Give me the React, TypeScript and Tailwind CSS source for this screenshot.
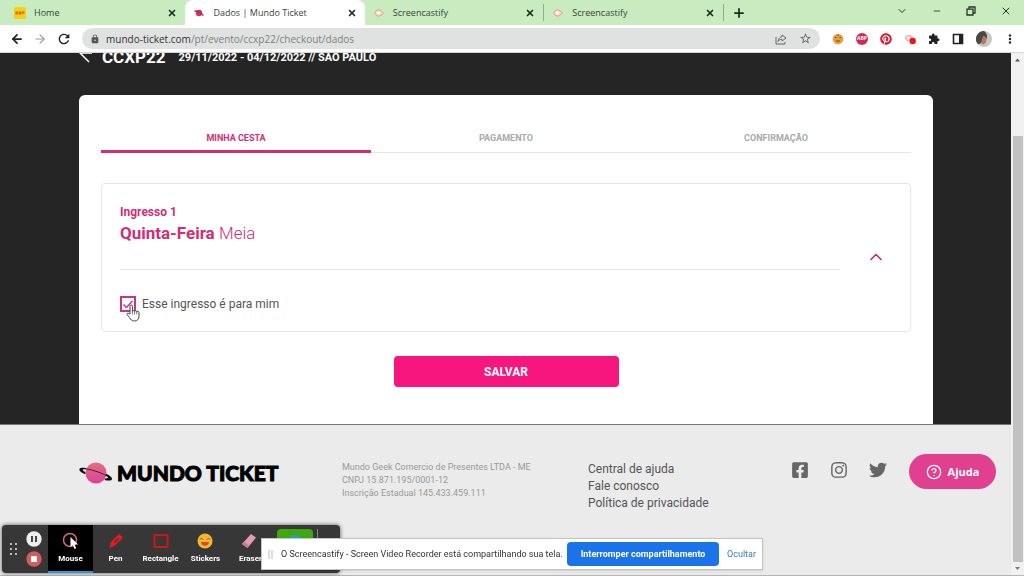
import React, { useState } from 'react';
import {
  ArrowLeft,
  ArrowRight,
  ChevronDown,
  ChevronUp,
  CircleHelp,
  Minus,
  MoreVertical,
  Plus,
  X,
} from 'lucide-react';
import { FaFacebookSquare, FaInstagram, FaPinterest, FaTwitter } from 'react-icons/fa';
import { MdExtension, MdLock, MdOutlineStarBorder, MdRefresh } from 'react-icons/md';

interface BrowserTabProps {
  title: string;
  icon: React.ReactNode;
  active?: boolean;
  divider?: boolean;
}

function BrowserTab({ title, icon, active, divider }: BrowserTabProps) {
  return (
    <div className={active ? 'flex flex-1 h-full rounded-t-lg bg-white' : 'flex flex-1 h-full'}>
      <div className="flex flex-1 items-center gap-2 px-2">
        {icon}
        <button className="flex-1 text-left text-[9px] leading-4 text-[#3a4438]">{title}</button>
        <button aria-label={`Fechar ${title}`}>
          <X className="size-[10px] text-[#1f2a1f]" strokeWidth={4} />
        </button>
      </div>
      {divider && <div className="my-1 w-px bg-[#8fae8a]" />}
    </div>
  );
}

function HomeIcon() {
  return (
    <svg viewBox="0 0 12 12" className="size-3">
      <rect width="12" height="12" rx="2" fill="#f8cf16" />
      <path d="M1.500 4.500h2.500v1H3v1h1v1H1.500zM4.500 4.500H7v3H4.500zM7.500 4.500h3v2h-2v1h-1z" fill="#c8701c" />
    </svg>
  );
}

function PlanetIcon() {
  return (
    <svg viewBox="0 0 12 12" className="size-3">
      <circle cx="6" cy="6" r="3.200" fill="#d8306f" />
      <path d="M1.500 4c3 0 6.500 2 9 4.600" stroke="#a82c5c" strokeWidth="1.300" fill="none" />
    </svg>
  );
}

function CastIcon() {
  return (
    <svg viewBox="0 0 12 12" className="size-3">
      <path d="M4 3 1.500 6 4 9h3l3.500-3L7 3z" fill="#f7dccb" stroke="#ec9a87" />
      <circle cx="5.500" cy="6" r="1.500" fill="#fff" />
    </svg>
  );
}

function TabStrip() {
  return (
    <div className="flex h-[25px] shrink-0 items-center bg-[#c8ebbf] pl-1.5">
      <div className="flex h-full w-[70.5%] shrink-0">
        <BrowserTab title="Home" icon={<HomeIcon />} />
        <BrowserTab title="Dados | Mundo Ticket" icon={<PlanetIcon />} active />
        <BrowserTab title="Screencastify" icon={<CastIcon />} divider />
        <BrowserTab title="Screencastify" icon={<CastIcon />} divider />
      </div>
      <button aria-label="Nova guia" className="ml-2">
        <Plus className="size-3.5 text-[#1f2a1f]" strokeWidth={3} />
      </button>
      <div className="mb-1 ml-auto flex items-center gap-6 pr-3 text-[#2b332a]">
        <button aria-label="Pesquisar guias"><ChevronDown className="size-3" /></button>
        <button aria-label="Minimizar"><Minus className="size-[10px]" /></button>
        <button aria-label="Restaurar">
          <svg viewBox="0 0 10 10" className="size-[10px]" fill="none" stroke="currentColor" strokeWidth="1.300">
            <path d="M1 3.200h6V9H1zM3 3V1h6v6H7.200" />
          </svg>
        </button>
        <button aria-label="Fechar"><X className="size-3" /></button>
      </div>
    </div>
  );
}

function AddressBar() {
  return (
    <div className="flex h-7 shrink-0 items-center border-b border-[#d5d8d5] bg-white pl-2.5 pr-2">
      <div className="flex items-center gap-[9px]">
        <button aria-label="Voltar"><ArrowLeft className="size-3.5 text-[#222]" strokeWidth={3} /></button>
        <button aria-label="Avançar"><ArrowRight className="size-3.5 text-[#999]" strokeWidth={2} /></button>
        <button aria-label="Recarregar"><MdRefresh className="size-4 text-[#222]" /></button>
      </div>
      <div className="ml-2.5 flex h-[21px] flex-1 items-center rounded-full bg-[#dfe2e1] px-2">
        <MdLock className="size-[10px] text-[#555]" />
        <p className="ml-1.5 flex-1 text-[10px] leading-4 text-[#7d8180]">
          <span className="text-[#333]">mundo-ticket.com</span>/pt/evento/ccxp22/checkout/dados
        </p>
        <div className="flex items-center gap-3 text-[#666]">
          <button aria-label="Compartilhar">
            <svg viewBox="0 0 12 12" className="size-3" fill="none" stroke="currentColor">
              <path d="M1 4v7h9V9M7 2l4 3-4 3V6.300C5 6.300 4 7 3 8.500 3.300 5.500 5 4 7 3.700z" />
            </svg>
          </button>
          <button aria-label="Favoritar"><MdOutlineStarBorder className="size-[13px]" /></button>
        </div>
      </div>
      <div className="ml-3 flex items-center gap-3">
        <svg viewBox="0 0 12 12" className="size-3">
          <circle cx="6" cy="6" r="5.300" fill="#e3a03c" />
          <path d="M3 4.500h1.500M7.500 4.500H9M4 8h4M6 2v1" stroke="#7c4415" strokeWidth="1.200" />
        </svg>
        <span className="flex size-3 items-center justify-center rounded-full bg-[#d02a55] text-[5px] font-bold leading-none text-white">
          ABP
        </span>
        <FaPinterest className="size-3 text-[#cf2336]" />
        <svg viewBox="0 0 12 12" className="size-3">
          <path d="M3 2 0.500 5 3 8.500h4L9.500 5 7 2z" fill="#f3b9b5" />
          <circle cx="4.500" cy="5" r="1.500" fill="#fff" />
          <circle cx="8.700" cy="8" r="3.200" fill="#e9151f" />
        </svg>
        <MdExtension className="size-3 text-[#222]" />
        <svg viewBox="0 0 12 12" className="size-3">
          <path d="M1.500 1.500h9v9h-9z" fill="none" stroke="#222" strokeWidth="1.600" />
          <path d="M7 1.500h3.500v9H7z" fill="#222" />
        </svg>
        <svg viewBox="0 0 16 16" className="size-4">
          <circle cx="8" cy="8" r="8" fill="#c9c8c0" />
          <path d="M8 0a8 8 0 0 0-6 13.300C5 13 6 10 10 9c2-3 1-7-2-9z" fill="#4c4a40" />
          <path d="M7 5c3 0 4 3 3 6s-4 3-5 1z" fill="#b57a66" />
        </svg>
        <button aria-label="Menu"><MoreVertical className="size-3 text-[#222]" strokeWidth={3} /></button>
      </div>
    </div>
  );
}

function CheckoutSteps() {
  return (
    <ol className="grid grid-cols-3 text-center text-[9px] font-bold leading-4 text-[#a9a9a9]">
      <li className="border-b-[3px] border-[#d02e76] pb-1 text-[#d02e76]">MINHA CESTA</li>
      <li className="border-b border-[#e6e6e6] pb-1.5">PAGAMENTO</li>
      <li className="border-b border-[#e6e6e6] pb-1.5">CONFIRMAÇÃO</li>
    </ol>
  );
}

function HandCursor() {
  return (
    <svg viewBox="0 0 14 18" className="absolute left-1.5 top-2 h-[18px] w-3.5">
      <path
        d="M4 10V2.300a1.200 1.200 0 0 1 2.400 0V7.500c0-1.300 2.200-1.200 2.200 0 0-1.200 2.200-1 2.200.3 0-1 2.200-.8 2.200.7v3.800c0 2.500-1.500 4.700-4.500 4.700-3 0-3.800-1.400-5-3.500L1 10.500c-.5-1 .8-1.800 1.700-1z"
        fill="#fff"
        stroke="#444"
      />
      <path d="M6.400 8v2.500M8.600 8v2.500M10.800 8v2.500" stroke="#444" strokeWidth="0.700" />
    </svg>
  );
}

function TicketCard() {
  const [mine, setMine] = useState(true);

  return (
    <section className="mt-[30px] flex items-center rounded border border-[#e6e6e6] px-[18px] pb-[17px] pt-5">
      <div className="flex-1">
        <p className="text-xs font-bold leading-4 text-[#d02e76]">Ingresso 1</p>
        <h2 className="text-[17px] leading-[26px] text-[#d02e76]">
          <span className="font-bold">Quinta-Feira</span> <span className="font-light">Meia</span>
        </h2>
        <div className="mt-[23px] border-t border-[#e6e6e6]" />
        <label className="mt-6 flex items-center gap-1.5 text-xs leading-5 text-[#555]">
          <span className="relative flex">
            <input
              type="checkbox"
              checked={mine}
              onChange={(e) => setMine(e.target.checked)}
              className="size-4 appearance-none border-2 border-[#c9357f] bg-white"
            />
            {mine && (
              <svg viewBox="0 0 16 16" className="absolute inset-0 size-4" fill="none" stroke="#c9357f" strokeWidth="1.500">
                <path d="m3.500 8.500 3 3 6-6.500" />
              </svg>
            )}
            <HandCursor />
          </span>
          Esse ingresso é para mim
        </label>
      </div>
      <button aria-label="Recolher ingresso" className="mb-1 ml-[26px] mr-1.5">
        <ChevronUp className="size-5 text-[#c0306f]" />
      </button>
    </section>
  );
}

function MundoTicketLogo() {
  return (
    <div className="flex items-center gap-1">
      <svg viewBox="0 0 34 24" className="h-6 w-[34px]">
        <defs>
          <linearGradient id="planet" x1="0" y1="0" x2="0" y2="1">
            <stop offset="0" stopColor="#e2707c" />
            <stop offset="1" stopColor="#dd3f9c" />
          </linearGradient>
        </defs>
        <circle cx="17" cy="12" r="10.500" fill="url(#planet)" />
        {/* the ring is thick at both ends and a thin line across the planet */}
        <path
          d="M7 7C3 6.300.3 6.700.3 8.500c0 1.800 2.500 3.300 6.200 4.800L6.300 11C4 10 3.300 9 4 8.600c.6-.4 1.500-.4 2.700-.2z"
          fill="#111"
        />
        <path d="M6.500 7.700C14 9 23 12 28 15" fill="none" stroke="#222" strokeWidth="0.900" />
        <path
          d="M27.300 12.800c3.200 1.500 5.700 3.200 5.700 5.200 0 1.700-3 1.900-7.600 1l1-1.700c2.200.3 3 .1 2.600-.7-.4-.7-1.300-1.400-2.300-2z"
          fill="#111"
        />
      </svg>
      <span className="font-['Lato'] text-[21px] font-black leading-[22px] text-black [-webkit-text-stroke:1px_black]">
        MUNDO TICKET
      </span>
    </div>
  );
}

function Footer() {
  return (
    <footer className="flex flex-1 items-start border-t border-[#777] bg-[#ebebeb] pl-[79px] pr-[78px] pt-9">
      <div className="w-[263px]">
        <MundoTicketLogo />
      </div>
      <p className="w-[246px] text-[9px] leading-[13px] text-[#999]">
        Mundo Geek Comercio de Presentes LTDA - ME
        <br />
        CNPJ 15.871.195/0001-12
        <br />
        Inscrição Estadual 145.433.459.111
      </p>
      <nav className="flex w-[203px] flex-col text-xs leading-[17px] text-[#555]">
        <a href="#ajuda">Central de ajuda</a>
        <a href="#contato">Fale conosco</a>
        <a href="#privacidade">Política de privacidade</a>
      </nav>
      <div className="flex gap-[21px] text-[#666]">
        <a href="#facebook" aria-label="Facebook"><FaFacebookSquare className="size-[18px]" /></a>
        <a href="#instagram" aria-label="Instagram"><FaInstagram className="size-[18px]" /></a>
        <a href="#twitter" aria-label="Twitter"><FaTwitter className="size-[18px]" /></a>
      </div>
    </footer>
  );
}

function Scrollbar() {
  return (
    <div className="flex w-[13px] shrink-0 flex-col items-center bg-[#f1f1f1]">
      <svg viewBox="0 0 13 13" className="size-[13px]"><path d="M4 8.500h5L6.500 5.500z" fill="#555" /></svg>
      <div className="h-[70px]" />
      <div className="w-2.5 flex-1 bg-[#c1c1c1]" />
      <svg viewBox="0 0 13 13" className="size-[13px]"><path d="M4 5h5L6.500 8z" fill="#777" /></svg>
    </div>
  );
}

function Tool({ label, active, children }: { label: string; active?: boolean; children: React.ReactNode }) {
  return (
    <button
      className={
        active
          ? 'flex w-[45px] flex-col items-center justify-center gap-1 border-b-2 border-[#2a9be0] bg-black'
          : 'flex w-[45px] flex-col items-center justify-center gap-1 border-b-2 border-transparent'
      }
    >
      {children}
      <span className="font-['Roboto'] text-[8px] font-bold leading-[10px] text-white">{label}</span>
    </button>
  );
}

function RecorderToolbar() {
  return (
    <div className="fixed bottom-[3px] left-0.5 flex h-12 w-[338px] rounded-sm bg-[#373737] shadow-[0_0_4px_#555]">
      <div className="flex w-[46px] items-center justify-between pl-2 pr-1.5">
        <svg viewBox="0 0 8 12" className="h-3 w-2" fill="#bbb">
          <path d="M0 0h2v2H0zM5 0h2v2H5zM0 5h2v2H0zM5 5h2v2H5zM0 10h2v2H0zM5 10h2v2H5z" />
        </svg>
        <div className="flex flex-col gap-1">
          <button aria-label="Pause">
            <svg viewBox="0 0 16 16" className="size-4">
              <circle cx="8" cy="8" r="7.700" fill="#eee" />
              <path d="M6 5v6M10 5v6" stroke="#333" strokeWidth="1.800" />
            </svg>
          </button>
          <button aria-label="Stop">
            <svg viewBox="0 0 16 16" className="size-4">
              <circle cx="8" cy="8" r="7.700" fill="#d65a5e" />
              <path d="M5 5h6v6H5z" fill="#fff" />
            </svg>
          </button>
        </div>
      </div>
      <Tool label="Mouse" active>
        <svg viewBox="0 0 18 18" className="size-[18px]">
          <circle cx="8" cy="8" r="6.500" fill="none" stroke="#d56a6a" strokeWidth="1.500" />
          <path d="M8.500 5v10l2.300-2 1.700 4 1.700-.8-1.700-3.700H16z" fill="#fff" />
        </svg>
      </Tool>
      <Tool label="Pen">
        <svg viewBox="0 0 18 18" className="size-[18px]">
          <path d="m2.500 16 1.500-6L12 2l4 3.500L8 13.500z" fill="#e0201f" />
          <path d="m7.500 10.500 4-4" stroke="#7b1515" strokeWidth="1.200" />
        </svg>
      </Tool>
      <Tool label="Rectangle">
        <svg viewBox="0 0 18 18" className="size-[18px]">
          <path d="M2.500 3h13v12h-13z" fill="none" stroke="#cf1616" strokeWidth="2" />
        </svg>
      </Tool>
      <Tool label="Stickers">
        <svg viewBox="0 0 18 18" className="size-[18px]">
          <circle cx="8" cy="9" r="7.500" fill="#f5b731" />
          <path d="M3 7.500c.8-1.300 2.200-1.300 3 0M10 7.500c.8-1.300 2.200-1.300 3 0" fill="none" stroke="#7a3b12" />
          <path d="M4 10h8c0 5-8 5-8 0z" fill="#d94a2c" />
        </svg>
      </Tool>
      <Tool label="Eraser">
        <svg viewBox="0 0 18 18" className="size-[18px]">
          <path d="M0 12 9 2l5 3.500L5.500 16z" fill="#e39bb5" />
          <path d="m0 12 2-2.200 5.500 3.800-2 2.400z" fill="#c7809b" />
        </svg>
      </Tool>
      <div className="flex items-start gap-1 pl-1 pt-1">
        <svg viewBox="0 0 36 30" className="h-[30px] w-9">
          <rect width="36" height="30" rx="4" fill="#3fa80f" />
          <circle cx="18" cy="15" r="9" fill="#2a9fb5" />
        </svg>
        <div className="h-8 w-px bg-[#888]" />
      </div>
    </div>
  );
}

function ShareNotice() {
  return (
    <div className="fixed bottom-1.5 left-[261px] flex h-8 w-[502px] items-center border border-[#c4c4c4] bg-white px-1.5 font-['Roboto',sans-serif] shadow-sm">
      <svg viewBox="0 0 5 9" className="h-[9px] w-[5px]"><path d="M1 0v9M4 0v9" stroke="#bbb" /></svg>
      <p className="flex-1 whitespace-nowrap pl-2 text-[9px] leading-4 text-[#333]">
        O Screencastify - Screen Video Recorder está compartilhando sua tela.
      </p>
      <button className="h-6 w-[152px] shrink-0 whitespace-nowrap rounded-sm bg-[#1a73e8] text-[9px] font-bold leading-4 text-white">
        Interromper compartilhamento
      </button>
      <button className="pl-2 text-[9px] leading-4 text-[#3a7ab8]">Ocultar</button>
    </div>
  );
}

export default function App() {
  return (
    <div className="flex h-screen flex-col overflow-hidden border-b border-[#b5b5b5] font-['Open_Sans','Noto_Sans',sans-serif]">
      <TabStrip />
      <AddressBar />
      <div className="flex min-h-0 flex-1">
        <div className="flex min-w-0 flex-1 flex-col bg-[#252525] font-['Roboto',sans-serif]">
          {/* page is scrolled, so only the lower part of the header shows */}
          <header className="flex h-3 shrink-0 items-end gap-[9px] overflow-hidden pl-[79px] pr-[78px] font-bold text-white">
            <a href="#voltar" aria-label="Voltar">
              <svg viewBox="0 0 14 20" className="h-5 w-3.5" fill="none" stroke="currentColor" strokeWidth="1.500">
                <path d="M9 0 1 8l9 9M1 8h12" />
              </svg>
            </a>
            <h1 className="text-[17px] leading-4">CCXP22</h1>
            <p className="pl-1 text-[11px] leading-[14px]">29/11/2022 - 04/12/2022 // SÃO PAULO</p>
          </header>
          <main className="pl-[79px] pr-[78px] pt-[30px]">
            <div className="rounded-t-md bg-white px-[22px] pb-[37px] pt-[35px]">
              <CheckoutSteps />
              <TicketCard />
              <div className="mt-6 flex justify-center">
                <button className="h-[31px] w-[225px] rounded bg-[#f7167e] text-xs font-bold leading-4 text-white">
                  SALVAR
                </button>
              </div>
            </div>
          </main>
          <Footer />
        </div>
        <Scrollbar />
      </div>
      <button className="fixed bottom-[87px] right-7 flex h-[35px] w-[87px] items-center justify-center gap-1.5 rounded-full bg-[#e0408f] text-[11px] font-bold leading-4 text-white">
        <CircleHelp className="size-4" />
        Ajuda
      </button>
      <RecorderToolbar />
      <ShareNotice />
    </div>
  );
}
